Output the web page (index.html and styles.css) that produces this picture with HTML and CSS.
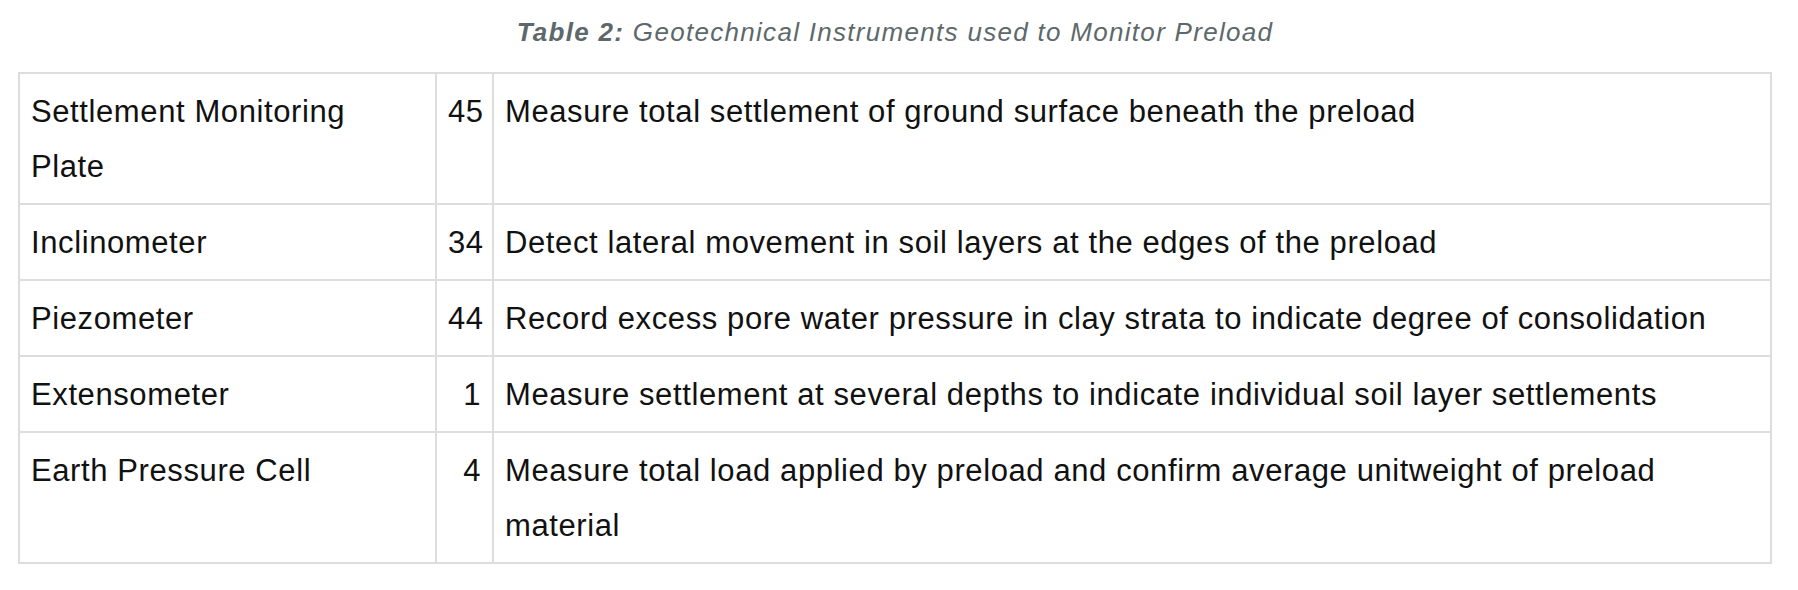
FILE: index.html
```html
<!DOCTYPE html>
<html>
<head>
<meta charset="utf-8">
<link rel="stylesheet" href="styles.css">
</head>
<body>
<div class="wrap">
  <table class="inst">
    <caption class="cap"><b>Table 2:</b> Geotechnical Instruments used to Monitor Preload</caption>
    <colgroup>
      <col class="c-name">
      <col class="c-num">
      <col class="c-desc">
    </colgroup>
    <tbody>
      <tr><td class="name">Settlement Monitoring Plate</td><td class="num">45</td><td>Measure total settlement of ground surface beneath the preload</td></tr>
      <tr><td class="name">Inclinometer</td><td class="num">34</td><td>Detect lateral movement in soil layers at the edges of the preload</td></tr>
      <tr><td class="name">Piezometer</td><td class="num">44</td><td>Record excess pore water pressure in clay strata to indicate degree of consolidation</td></tr>
      <tr><td class="name">Extensometer</td><td class="num">1</td><td>Measure settlement at several depths to indicate individual soil layer settlements</td></tr>
      <tr><td class="name">Earth Pressure Cell</td><td class="num">4</td><td>Measure total load applied by preload and confirm average unitweight of preload material</td></tr>
    </tbody>
  </table>
</div>
</body>
</html>
```
FILE: styles.css
```css
html, body {
  margin: 0;
  padding: 0;
  background: #ffffff;
}
.wrap {
  padding: 0 0 0 18px;
  width: 1754px;
}
.inst {
  width: 100%;
  border-collapse: collapse;
  table-layout: fixed;
  font-family: "Liberation Sans", Arial, sans-serif;
  font-size: 31px;
  letter-spacing: 0.6px;
  line-height: 55px;
  color: #111111;
}
.cap {
  caption-side: top;
  font-family: "Liberation Sans", Arial, sans-serif;
  font-style: italic;
  font-size: 26px;
  letter-spacing: 1.3px;
  line-height: 30px;
  color: #5d686b;
  padding: 17px 0 25px;
  text-align: center;
}
.cap b {
  font-weight: bold;
}
.c-name { width: 417px; }
.c-num { width: 57px; }
.inst td {
  border: 2px solid #dddddd;
  padding: 10px 12px 9px 11px;
  vertical-align: top;
  text-align: left;
}
.inst td.name {
  padding-right: 18px;
}
.inst td.num {
  text-align: right;
  padding-right: 11px;
}
```
